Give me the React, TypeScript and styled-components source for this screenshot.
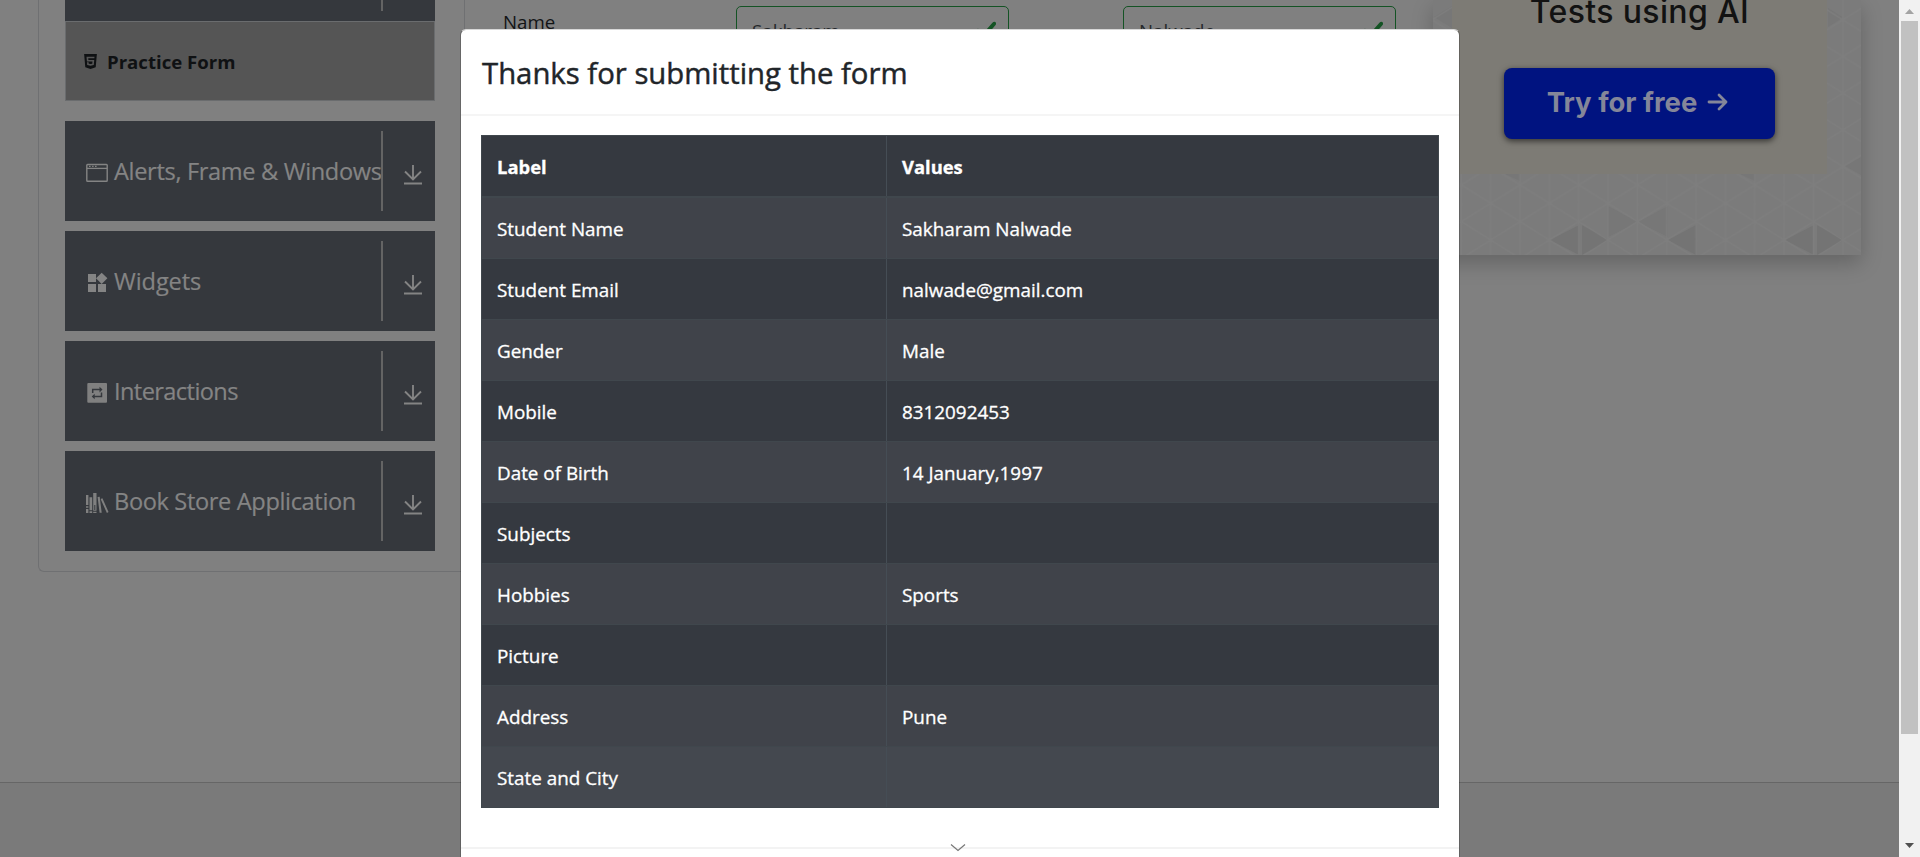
import React from "react";
import styled, { createGlobalStyle, css } from "styled-components";
import { FaHtml5 } from "react-icons/fa";

const Global = createGlobalStyle`
  * { box-sizing: border-box; }
  html, body { margin: 0; height: 857px; overflow: hidden; }
  body { font-family: "Open Sans", "Noto Sans", sans-serif; background: #808080; color: #121416; }
`;

const Screen = styled.div`
  position: relative;
  display: flex;
  width: 1920px;
  height: 857px;
  overflow: hidden;
`;
const Page = styled.div`
  display: flex;
  flex-direction: column;
  width: 1899px;
  height: 857px;
`;
const Content = styled.div`
  display: flex;
  align-items: flex-start;
  height: 782px;
`;
const Footer = styled.footer`
  flex: 1;
  border-top: 1px solid #666;
  background: #7a7a7a;
`;
const Frame = styled.main`
  flex: none;
  display: flex;
  margin-left: 38px;
  width: 1382px;
  height: 572px;
  border: 1px solid #6f7072;
  border-width: 0 0 1px 1px;
  border-radius: 0 0 0 6px;
`;
const Sidebar = styled.nav`
  flex: none;
  width: 426px;
  height: 571px;
  padding-left: 26px;
  border-right: 1px solid #6f7072;
`;
const TopGroup = styled.div`
  display: flex;
  width: 370px;
  height: 21px;
  padding-left: 316px;
  background: #35383d;
`;
const TopRule = styled.span`
  width: 2px;
  height: 11px;
  background: #646464;
`;
const ActiveItem = styled.div`
  display: flex;
  align-items: center;
  gap: 8px;
  width: 370px;
  height: 80px;
  margin-bottom: 20px;
  padding: 0 0 0 16px;
  border: 1px solid #6a6c6e;
  background: #555;
  color: #0f1113;
  font-size: 18.6px;
  font-weight: 700;
`;
const Group = styled.div`
  display: flex;
  align-items: center;
  width: 370px;
  height: 100px;
  margin-bottom: 10px;
  background: #35383d;
  color: #848484;
`;
const GroupTitle = styled.div`
  display: flex;
  align-items: center;
  gap: 5px;
  flex: none;
  width: 316px;
  padding-left: 20px;
  white-space: nowrap;
`;
const GroupText = styled.span<{ $spacing: number }>`
  padding-bottom: 1px;
  font-size: 23.6px;
  line-height: 30px;
  letter-spacing: ${(p) => p.$spacing}px;
  -webkit-text-stroke: 0.2px currentColor;
`;
const IconSlot = styled.span`
  display: flex;
  width: 24px;
  height: 24px;
  margin-top: 3px;
`;
const Expand = styled.div`
  display: flex;
  align-items: center;
  width: 54px;
  height: 80px;
  padding: 7px 0 0 20px;
  border-left: 2px solid #646464;
`;
const FormRow = styled.div`
  display: flex;
  align-items: flex-start;
  padding-left: 38px;
`;
const FieldLabel = styled.label`
  width: 233px;
  padding-top: 8px;
  font-size: 18.7px;
  line-height: 28px;
`;
const Field = styled.div`
  display: flex;
  justify-content: space-between;
  align-items: flex-start;
  width: 273px;
  height: 48px;
  margin: 6px 114px 0 0;
  padding: 10px 11px 0 15px;
  border: 1px solid #145324;
  border-radius: 5px;
  color: #25282b;
  font-size: 18.7px;
  line-height: 28px;
`;
const CheckMark = styled.svg`
  margin-top: 2px;
`;
const Ad = styled.aside`
  position: relative;
  flex: none;
  display: flex;
  width: 428px;
  height: 255px;
  margin-left: 13px;
  background: #7b7b7b;
  box-shadow: 0 8px 20px rgba(0, 0, 0, 0.22);
`;
const Pattern = styled.svg`
  position: absolute;
  inset: 0;
`;
const AdPanel = styled.div`
  position: relative;
  display: flex;
  flex-direction: column;
  align-items: center;
  width: 375px;
  height: 174px;
  margin-left: 19px;
  background: #7d7b75;
  font-family: Inter, "Open Sans", sans-serif;
`;
const AdHeading = styled.div`
  height: 67px;
  margin-top: -8px;
  color: #121212;
  font-size: 32px;
  font-weight: 500;
  line-height: 40px;
  letter-spacing: 0.35px;
  white-space: nowrap;
`;
const AdButton = styled.div`
  display: flex;
  align-items: center;
  justify-content: center;
  gap: 10px;
  width: 271px;
  height: 71px;
  margin: 9px 1px 0 0;
  padding: 0 3px 4px 0;
  border-radius: 8px;
  background: #001380;
  box-shadow: 0 2px 6px rgba(0, 0, 0, 0.6);
  color: #848699;
  font-size: 27.5px;
  font-weight: 700;
`;
const ScrollTrack = styled.div`
  display: flex;
  flex-direction: column;
  align-items: center;
  width: 21px;
  height: 857px;
  padding: 9px 0 9px 0;
  background: #f1f1f1;
`;
const Thumb = styled.div`
  width: 17px;
  height: 713px;
  margin: 7px 0 auto;
  background: #c1c1c1;
`;
const Modal = styled.section`
  position: absolute;
  left: 460px;
  top: 29px;
  width: 1000px;
  height: 840px;
  border: 1px solid rgba(0, 0, 0, 0.2);
  border-top-color: #d8d8d8;
  border-radius: 6px;
  background: #fff;
  background-clip: padding-box;
`;
const ModalHeader = styled.header`
  height: 86px;
  padding: 19px 20px 0 21px;
  border-bottom: 2px solid #f5f5f5;
`;
const Title = styled.h4`
  margin: 0;
  color: #212529;
  font-size: 29.3px;
  font-weight: 500;
  line-height: 48px;
  white-space: nowrap;
  -webkit-text-stroke: 0.45px currentColor;
`;
const ModalBody = styled.div`
  height: 733px;
  padding: 19px 20px 0;
  border-bottom: 2px solid #f3f3f3;
`;
const Table = styled.div`
  width: 958px;
  background: #343a40;
  color: #fff;
`;
const Cell = styled.div<{ $divided?: boolean }>`
  padding: 16px 15px 0;
  border-right: ${(p) => (p.$divided ? "1px solid #454d55" : "0")};
  font-size: 18.85px;
  line-height: 30px;
  white-space: nowrap;
  -webkit-text-stroke: 0.3px currentColor;
`;
const Row = styled.div<{ $tone: "head" | "odd" | "even" | "hover" }>`
  display: grid;
  grid-template-columns: 405px 551px;
  height: 61px;
  border: 1px solid #40474d;
  border-width: 0 1px 1px;
  background: ${(p) => ({ head: "#353940", odd: "#40434a", even: "#353940", hover: "#44484f" })[p.$tone]};
  ${(p) => p.$tone === "head" && css`
    height: 63px;
    border-width: 1px 1px 2px;
    font-weight: 700;
    ${Cell} { font-size: 18.4px; }
  `}
`;
const PullHint = styled.svg`
  position: absolute;
  left: 949px;
  top: 843px;
`;

const Download = () => (
  <svg width="20" height="20" viewBox="0 0 20 20" fill="none" stroke="#848484" strokeWidth="1.9">
    <path d="M10 0v15M2 6.5l8 8 8-8M1 18.5h18" />
  </svg>
);
const Valid = () => (
  <CheckMark width="22.5" height="22.5" viewBox="0 0 8 8" fill="#145324">
    <path d="M2.3 6.73L.6 4.53c-.4-1.04.46-1.4 1.1-.8l1.1 1.4 3.4-3.8c.6-.63 1.6-.27 1.2.7l-4 4.6c-.43.5-.8.4-1.1.1z" />
  </CheckMark>
);
const WindowIcon = () => (
  <svg width="24" height="24" viewBox="0 0 24 24" fill="none" stroke="#848484">
    <rect x="1.8" y="3.5" width="20.4" height="16.7" rx="0.8" strokeWidth="1.4" />
    <path d="M2 7.4h20" strokeWidth="1.3" />
    <path d="M4 5.4h1.6M7.1 5.4h1.5M10 5.4h1.6" strokeWidth="1.2" />
  </svg>
);
const WidgetIcon = () => (
  <svg width="24" height="24" viewBox="0 0 24 24" fill="#848484">
    <path d="M3 3h8v8H3zM3 13h8v8H3zM13 13h8v8h-8zM16.7 1.7l5.7 5.6-5.7 5.7L11 7.3z" />
  </svg>
);
const InteractionIcon = () => (
  <svg width="24" height="24" viewBox="0 0 24 24" fill="none">
    <rect x="2.3" y="2" width="19.7" height="19.7" rx="1" fill="#808080" />
    <path d="M7.7 12V8.6h8.5M16.5 11.6v3.8H8" stroke="#35383d" strokeWidth="1.5" />
    <path d="M14.5 5.8l3 2.8-3 2.8zM9.7 12.7l-3 2.8 3 2.8z" fill="#35383d" />
  </svg>
);
const BooksIcon = () => (
  <svg width="24" height="24" viewBox="0 0 24 24" fill="#808080">
    <path d="M1 4h2.4v10H1zM1 15.3h2.4v1.4H1zM1 18h2.4v4H1zM4.5 6.2h2.7v13H4.5zM4.5 20.3h2.7V22H4.5zM8.2 2h3.3v17.7H8.2zM8.2 20.8h3.3V22H8.2zM12.6 6l2.1-.3 2 16H14.6zM15.6 8.1l1.8-.9 6.1 13.8-1.6.9z" />
    <path d="M9.8 14v5" stroke="#35383d" />
  </svg>
);

const groups = [
  { text: "Alerts, Frame & Windows", Icon: WindowIcon, spacing: -0.34 },
  { text: "Widgets", Icon: WidgetIcon, spacing: -0.1 },
  { text: "Interactions", Icon: InteractionIcon, spacing: -0.6 },
  { text: "Book Store Application", Icon: BooksIcon, spacing: -0.36 },
];

const rows: [string, string][] = [
  ["Student Name", "Sakharam Nalwade"],
  ["Student Email", "nalwade@gmail.com"],
  ["Gender", "Male"],
  ["Mobile", "8312092453"],
  ["Date of Birth", "14 January,1997"],
  ["Subjects", ""],
  ["Hobbies", "Sports"],
  ["Picture", ""],
  ["Address", "Pune"],
  ["State and City", ""],
];

export default function App() {
  return (
    <Screen>
      <Global />
      <Page>
        <Content>
          <Frame>
            <Sidebar>
              <TopGroup><TopRule /></TopGroup>
              <ActiveItem><FaHtml5 size={17} />Practice Form</ActiveItem>
              {groups.map(({ text, Icon, spacing }) => (
                <Group key={text}>
                  <GroupTitle>
                    <IconSlot><Icon /></IconSlot>
                    <GroupText $spacing={spacing}>{text}</GroupText>
                  </GroupTitle>
                  <Expand><Download /></Expand>
                </Group>
              ))}
            </Sidebar>
            <FormRow>
              <FieldLabel>Name</FieldLabel>
              <Field>Sakharam<Valid /></Field>
              <Field>Nalwade<Valid /></Field>
            </FormRow>
          </Frame>
          <Ad>
            <Pattern width="428" height="255">
              <defs>
                <pattern id="tri" width="58.7" height="36.7" patternUnits="userSpaceOnUse" patternTransform="translate(-1 19.8)">
                  <path d="M0 0v36.7M29.35 0v36.7M58.7 0v36.7M0 0l58.7 36.7M58.7 0L0 36.7" stroke="#7e7e7e" strokeWidth="1.2" fill="none" />
                </pattern>
              </defs>
              <g fill="#777">
                <path d="M1 17l18-11v22zM395 8v19l15-9.5zM412 166l16-9v18zM72 174h15v7zM307 174h15v7zM175 206v31l30-15zM205 222l30-16v31z" />
              </g>
              <g fill="#747474">
                <path d="M117 240l29-15v30zM149 225v30l28-15zM235 240l28-15v30zM352 240l29-15v30zM384 225v30l28-15z" />
              </g>
              <rect width="428" height="255" fill="url(#tri)" />
            </Pattern>
            <AdPanel>
              <AdHeading>Tests using AI</AdHeading>
              <AdButton>
                Try for free
                <svg width="21" height="20" viewBox="0 0 21 20" fill="none" stroke="#848699" strokeWidth="2.8" strokeLinecap="round" strokeLinejoin="round">
                  <path d="M2 10h17M12 3l7 7-7 7" />
                </svg>
              </AdButton>
            </AdPanel>
          </Ad>
        </Content>
        <Footer />
      </Page>
      <ScrollTrack>
        <svg width="9" height="5"><path d="M0 5L4.5 0 9 5z" fill="#a3a3a3" /></svg>
        <Thumb />
        <svg width="9" height="5"><path d="M0 0h9L4.5 5z" fill="#505050" /></svg>
      </ScrollTrack>
      <Modal role="dialog">
        <ModalHeader><Title>Thanks for submitting the form</Title></ModalHeader>
        <ModalBody>
          <Table>
            <Row $tone="head"><Cell $divided>Label</Cell><Cell>Values</Cell></Row>
            {rows.map(([label, value], i) => (
              <Row key={label} $tone={i === rows.length - 1 ? "hover" : i % 2 ? "even" : "odd"}>
                <Cell $divided>{label}</Cell>
                <Cell>{value}</Cell>
              </Row>
            ))}
          </Table>
        </ModalBody>
      </Modal>
      <PullHint width="18" height="10" fill="none" stroke="#777" strokeWidth="1.2"><path d="M2 1.5l7 6 7-6" /></PullHint>
    </Screen>
  );
}
